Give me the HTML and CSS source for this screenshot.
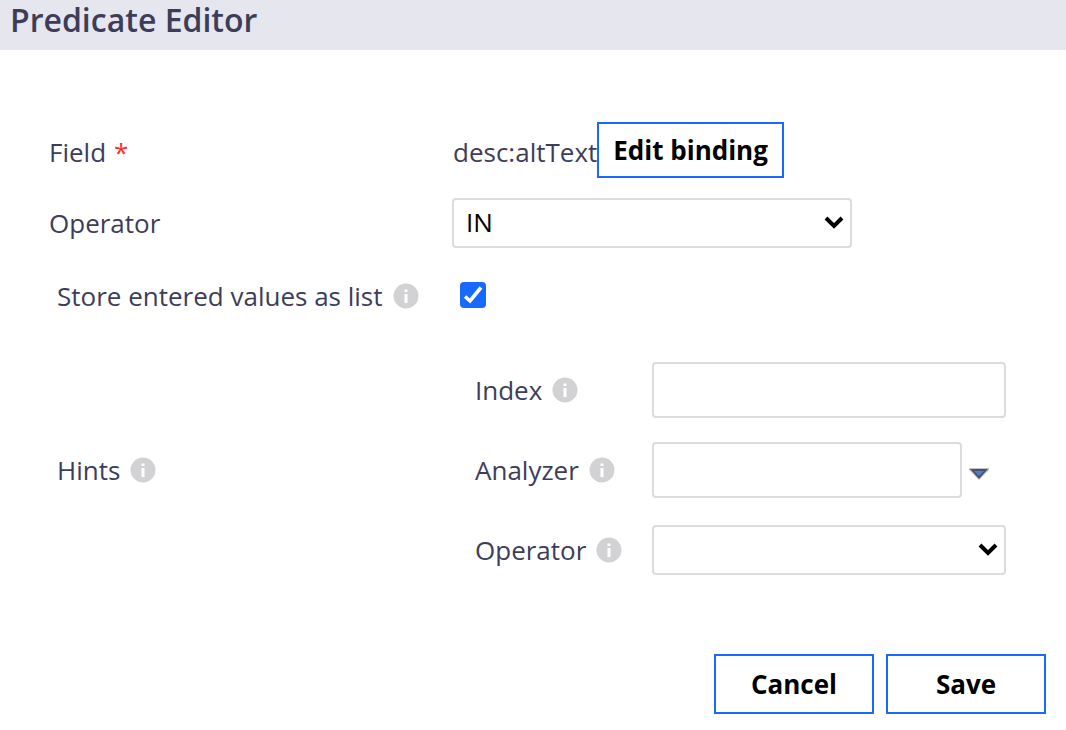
FILE: index.html
```html
<!DOCTYPE html>
<html lang="en">
<head>
  <meta charset="UTF-8">
  <title>Predicate Editor</title>
  <link rel="stylesheet" href="styles.css">
</head>
<body>
  <svg class="sprite" aria-hidden="true">
    <symbol id="info" viewBox="0 0 26 26">
      <circle cx="13" cy="13" r="12.5" fill="#d2d2d4"/>
      <path d="M11.5 6.5h3v2.5h-3zM11.5 11h3v9h-3z" fill="#fff"/>
    </symbol>
  </svg>

  <header class="header">
    <h1>Predicate Editor</h1>
  </header>

  <form class="editor">
    <div class="row row-field">
      <span class="label">Field <span class="required">*</span></span>
      <div class="binding">
        <span class="binding-name">desc:altText</span>
        <button type="button" class="btn btn-edit">Edit binding</button>
      </div>
    </div>

    <div class="row">
      <label class="label" for="operator">Operator</label>
      <select id="operator" class="operator">
        <option>IN</option>
      </select>
    </div>

    <div class="row row-check">
      <label class="label indent" for="asList">Store entered values as list <svg class="info"><use href="#info"/></svg></label>
      <input type="checkbox" id="asList" checked>
    </div>

    <div class="row row-hints">
      <span class="label indent">Hints <svg class="info"><use href="#info"/></svg></span>
      <div class="hints">
        <label class="label" for="index">Index <svg class="info"><use href="#info"/></svg></label>
        <input type="text" id="index">

        <label class="label" for="analyzer">Analyzer <svg class="info"><use href="#info"/></svg></label>
        <div class="combo">
          <input type="text" id="analyzer">
          <button type="button" class="combo-toggle" aria-label="Show analyzers">
            <svg width="20" height="12" viewBox="0 0 20 12">
              <path d="M0 0h20v2L10 12 0 2z" fill="#c3c3cc"/>
              <path d="M1 1h18l-9 10z" fill="#50506a"/>
              <path d="M5 3h10l-5 5z" fill="#4a7fd6"/>
            </svg>
          </button>
        </div>

        <label class="label" for="hintOperator">Operator <svg class="info"><use href="#info"/></svg></label>
        <select id="hintOperator">
          <option></option>
        </select>
      </div>
    </div>

    <div class="actions">
      <button type="button" class="btn">Cancel</button>
      <button type="submit" class="btn">Save</button>
    </div>
  </form>
</body>
</html>
```
FILE: styles.css
```css
* {
  box-sizing: border-box;
}
body {
  margin: 0;
  font-family: "Open Sans", sans-serif;
  font-size: 26px;
  line-height: 36px;
  color: #3d3d59;
  background: #fff;
}
.sprite {
  display: none;
}
.header {
  padding: 0 10px 10px;
  background: #e6e6ef;
}
h1 {
  margin: 0;
  font-size: 32px;
  font-weight: 600;
  line-height: 40px;
}
.editor {
  padding: 72px 20px 16px 49px;
}
.row {
  display: grid;
  grid-template-columns: 403px 1fr;
  align-items: center;
  margin-bottom: 20px;
}
.row-field .label, .binding-name {
  padding-top: 4px;
}
.row-check {
  min-height: 56px;
  margin-bottom: 38px;
}
.row-hints {
  margin-right: 40px;
  margin-bottom: 76px;
}
.label {
  display: flex;
  align-items: center;
}
.indent {
  padding-left: 8px;
}
.required {
  margin-left: 8px;
  color: #ff2d2d;
}
.info {
  width: 26px;
  height: 26px;
  margin-left: 10px;
}
.binding {
  display: flex;
  align-items: center;
  padding-left: 1px;
}
input[type="text"], select {
  width: 100%;
  border: 2px solid #dcdcdc;
  border-radius: 4px;
  background-color: #fff;
  font: inherit;
  color: #000;
}
input[type="text"] {
  height: 56px;
  padding: 0 12px;
}
select {
  appearance: none;
  height: 50px;
  padding: 0 40px 2px 12px;
  background-image: url("data:image/svg+xml,%3Csvg xmlns='http://www.w3.org/2000/svg' width='20' height='14' viewBox='0 0 20 14'%3E%3Cpath d='M2 2l8 8 8-8' fill='none' stroke='%23000' stroke-width='4'/%3E%3C/svg%3E");
  background-repeat: no-repeat;
  background-position: right 6px center;
}
.operator {
  max-width: 400px;
}
input[type="checkbox"] {
  appearance: none;
  width: 26px;
  height: 26px;
  margin: 0 8px 2px;
  border: 2px solid #767676;
  border-radius: 4px;
}
input[type="checkbox"]:checked {
  border: none;
  background: #1769ff url("data:image/svg+xml,%3Csvg xmlns='http://www.w3.org/2000/svg' viewBox='0 0 26 26'%3E%3Cpath d='M5 14.5l5 4.5L21 5.5' fill='none' stroke='%23fff' stroke-width='3.6'/%3E%3C/svg%3E");
}
.hints {
  display: grid;
  grid-template-columns: 177px 1fr;
  grid-auto-rows: 56px;
  row-gap: 24px;
  align-items: center;
  padding-left: 23px;
}
.combo {
  display: flex;
  align-items: center;
}
.combo-toggle {
  display: flex;
  flex: none;
  padding: 8px 17px 0 7px;
  border: none;
  background: none;
  cursor: pointer;
}
.btn {
  min-width: 160px;
  height: 60px;
  border: 2px solid #1769ff;
  background: #fff;
  font: inherit;
  font-weight: 700;
  color: #000;
  cursor: pointer;
}
.btn-edit {
  height: 56px;
  padding: 0 14px;
}
.btn:hover {
  background: #eef4ff;
}
.actions {
  display: flex;
  justify-content: flex-end;
  gap: 12px;
}
```
